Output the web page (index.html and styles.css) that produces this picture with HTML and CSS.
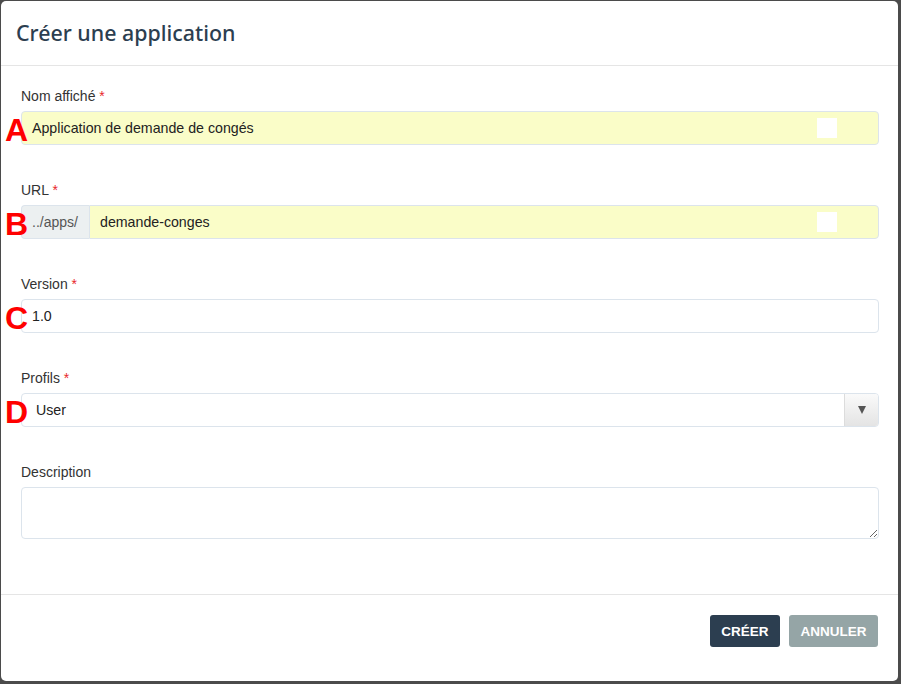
FILE: index.html
```html
<!DOCTYPE html>
<html lang="fr">
<head>
<meta charset="utf-8">
<title>Créer une application</title>
<link rel="stylesheet" href="styles.css">
</head>
<body>
<div class="modal">
  <div class="modal-header">
    <h1 class="modal-title">Créer une application</h1>
  </div>
  <div class="modal-body">
    <div class="group">
      <label class="label">Nom affiché <span class="req">*</span></label>
      <div class="field">
        <span class="mark">A</span>
        <div class="input yellow">Application de demande de congés<span class="ext"></span></div>
      </div>
    </div>
    <div class="group">
      <label class="label">URL <span class="req">*</span></label>
      <div class="field">
        <span class="mark">B</span>
        <div class="input-group">
          <span class="addon">../apps/</span>
          <div class="input yellow joined">demande-conges<span class="ext"></span></div>
        </div>
      </div>
    </div>
    <div class="group">
      <label class="label">Version <span class="req">*</span></label>
      <div class="field">
        <span class="mark">C</span>
        <div class="input">1.0</div>
      </div>
    </div>
    <div class="group">
      <label class="label">Profils <span class="req">*</span></label>
      <div class="field">
        <span class="mark">D</span>
        <div class="select">
          <span class="select-value">User</span>
          <span class="select-btn"><span class="tri"></span></span>
        </div>
      </div>
    </div>
    <div class="group">
      <label class="label">Description</label>
      <textarea class="textarea"></textarea>
    </div>
  </div>
  <div class="modal-footer">
    <button class="btn btn-primary">CRÉER</button>
    <button class="btn btn-muted">ANNULER</button>
  </div>
</div>
</body>
</html>
```
FILE: styles.css
```css
html, body {
  margin: 0;
  padding: 0;
}
body {
  background: #4b4b4b;
  width: 901px;
  height: 684px;
  overflow: hidden;
  font-family: "Liberation Sans", Arial, sans-serif;
  font-size: 14px;
  color: #333;
}
.modal {
  margin: 1px 0 0 1px;
  width: 897px;
  height: 680px;
  background: #fff;
  border-radius: 5px;
  display: flex;
  flex-direction: column;
  box-sizing: border-box;
}
.modal-header {
  height: 65px;
  box-sizing: border-box;
  border-bottom: 1px solid #e5e5e5;
  display: flex;
  align-items: center;
  padding: 0 15px 1px;
}
.modal-title {
  margin: 0;
  font-family: "Noto Sans", "Open Sans", sans-serif;
  font-weight: 500;
  font-size: 21.4px;
  color: #2c3e50;
  letter-spacing: 0;
}
.modal-body {
  padding: 20px 19px 21px 20px;
}
.group {
  margin-bottom: 35px;
}
.group:last-child {
  margin-bottom: 0;
}
.label {
  display: block;
  line-height: 20px;
  margin-bottom: 5px;
}
.req {
  color: #e8262b;
}
.field {
  position: relative;
}
.mark {
  position: absolute;
  left: -16px;
  top: 3px;
  font-size: 32px;
  font-weight: bold;
  color: #f00;
  line-height: 32px;
  z-index: 2;
}
.input {
  position: relative;
  height: 34px;
  box-sizing: border-box;
  border: 1px solid #dce4ec;
  border-radius: 4px;
  padding: 0 10px;
  display: flex;
  align-items: center;
  color: #222;
  background: #fff;
  font-size: 14.2px;
}
.yellow {
  background: #fafdc8;
}
.ext {
  position: absolute;
  right: 41px;
  top: 6px;
  width: 20px;
  height: 20px;
  background: #fff;
}
.input-group {
  display: flex;
}
.addon {
  width: 68px;
  height: 34px;
  box-sizing: border-box;
  border: 1px solid #dce4ec;
  border-right: none;
  border-radius: 4px 0 0 4px;
  background: #ecf0f1;
  color: #555;
  display: flex;
  align-items: center;
  padding-left: 10px;
}
.joined {
  flex: 1;
  border-radius: 0 4px 4px 0;
}
.select {
  height: 34px;
  box-sizing: border-box;
  border: 1px solid #dce4ec;
  border-radius: 4px;
  display: flex;
  align-items: center;
  overflow: hidden;
}
.select-value {
  flex: 1;
  padding-left: 14px;
  color: #222;
  font-size: 14.2px;
}
.select-btn {
  width: 33px;
  align-self: stretch;
  border-left: 1px solid #dcdcdc;
  background: linear-gradient(#fafafa, #e4e4e4);
  display: flex;
  align-items: center;
  justify-content: center;
}
.tri {
  width: 0;
  height: 0;
  border-left: 4.5px solid transparent;
  border-right: 4.5px solid transparent;
  border-top: 8px solid #555;
}
.textarea {
  display: block;
  width: 100%;
  height: 52px;
  box-sizing: border-box;
  border: 1px solid #dce4ec;
  border-radius: 4px;
  margin: 0;
  padding: 6px 10px;
  font-family: inherit;
  font-size: 14px;
  resize: vertical;
}
.modal-footer {
  border-top: 1px solid #e5e5e5;
  margin-top: 34px;
  padding: 20px 20px 0 20px;
  display: flex;
  justify-content: flex-end;
  gap: 9px;
}
.btn {
  height: 32px;
  border: none;
  border-radius: 3px;
  color: #fff;
  font-family: "Liberation Sans", Arial, sans-serif;
  font-weight: bold;
  font-size: 13.5px;
  padding: 0 11px;
  margin: 0;
}
.btn-primary {
  background: #2c3e50;
  width: 70px;
}
.btn-muted {
  background: #95a5a6;
  width: 89px;
}
```
